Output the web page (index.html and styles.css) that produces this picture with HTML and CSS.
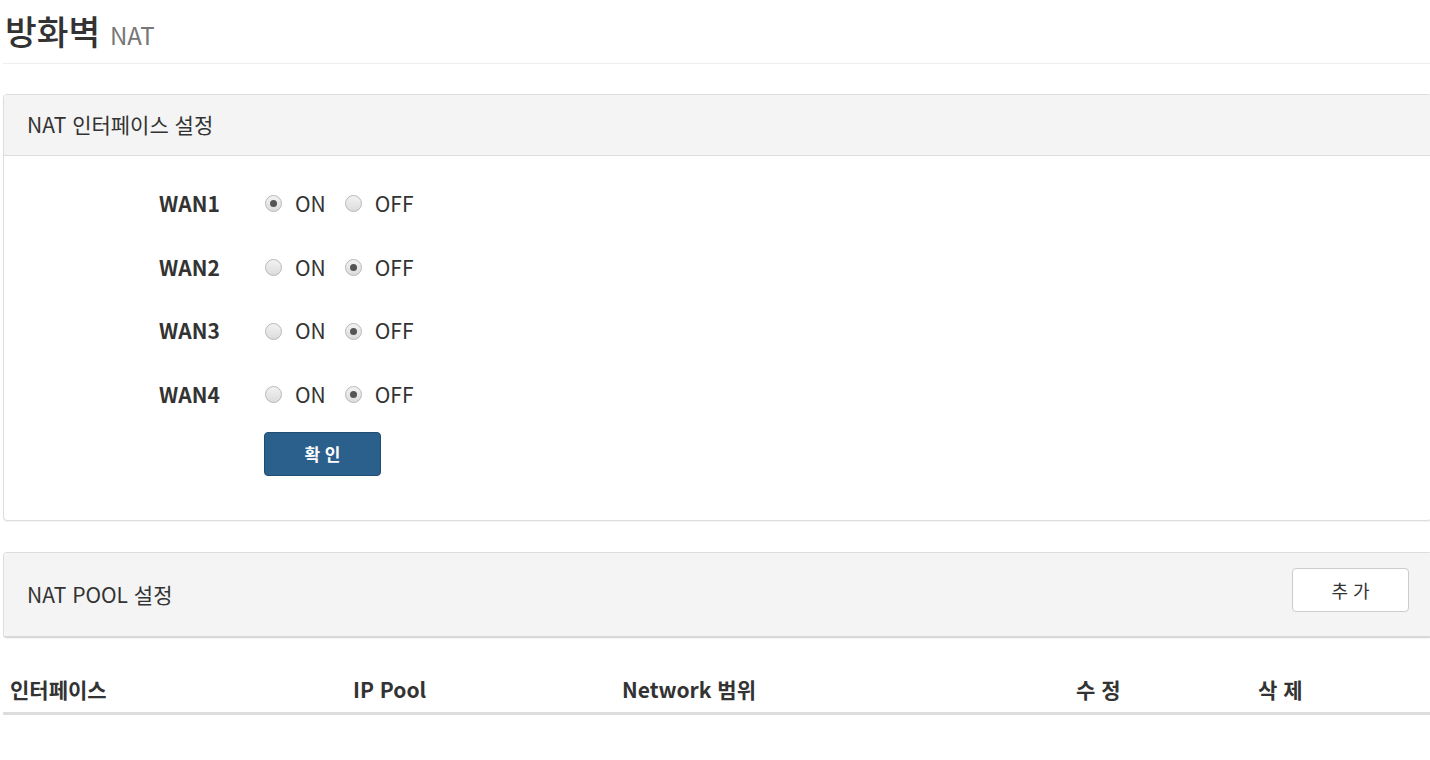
FILE: index.html
```html
<!DOCTYPE html>
<html lang="ko">
<head>
<meta charset="utf-8">
<title>방화벽 NAT</title>
<link rel="stylesheet" href="styles.css">
</head>
<body>
<div class="page">
  <div class="page-header">
    <h1>방화벽 <small>NAT</small></h1>
  </div>

  <section class="panel">
    <div class="panel-heading">NAT 인터페이스 설정</div>
    <div class="panel-body">
      <div class="form-row">
        <span class="label">WAN1</span>
        <label class="opt"><input type="radio" name="wan1" checked><span>ON</span></label>
        <label class="opt"><input type="radio" name="wan1"><span>OFF</span></label>
      </div>
      <div class="form-row">
        <span class="label">WAN2</span>
        <label class="opt"><input type="radio" name="wan2"><span>ON</span></label>
        <label class="opt"><input type="radio" name="wan2" checked><span>OFF</span></label>
      </div>
      <div class="form-row">
        <span class="label">WAN3</span>
        <label class="opt"><input type="radio" name="wan3"><span>ON</span></label>
        <label class="opt"><input type="radio" name="wan3" checked><span>OFF</span></label>
      </div>
      <div class="form-row">
        <span class="label">WAN4</span>
        <label class="opt"><input type="radio" name="wan4"><span>ON</span></label>
        <label class="opt"><input type="radio" name="wan4" checked><span>OFF</span></label>
      </div>
      <div class="actions">
        <button class="btn btn-primary" type="button">확 인</button>
      </div>
    </div>
  </section>

  <section class="panel panel-pool">
    <div class="panel-heading pool-heading">
      <span>NAT POOL 설정</span>
      <button class="btn btn-default" type="button">추 가</button>
    </div>
  </section>

  <div class="table">
    <div class="thead">
      <div class="th c1">인터페이스</div>
      <div class="th c2">IP Pool</div>
      <div class="th c3">Network 범위</div>
      <div class="th c4">수 정</div>
      <div class="th c5">삭 제</div>
    </div>
  </div>
</div>
</body>
</html>
```

FILE: styles.css
```css
html, body {
  margin: 0;
  padding: 0;
  overflow-x: hidden;
  background: #fff;
}

body {
  font-family: "Noto Sans CJK KR", "Noto Sans", sans-serif;
  color: #333;
  font-size: 21px;
}

.page {
  padding: 0 0 0 3px;
  margin-right: -2px;
}

.page-header {
  height: 64px;
  border-bottom: 1px solid #eee;
  box-sizing: border-box;
  padding: 6px 0 0 2px;
}

.page-header h1 {
  margin: 0;
  font-size: 34.5px;
  font-weight: 500;
  line-height: 48px;
  color: #333;
}

.page-header small {
  font-size: 24px;
  color: #777;
  font-weight: 400;
}

.panel {
  margin-top: 30px;
  border: 1px solid #ddd;
  border-radius: 4px;
  box-shadow: 0 1px 1px rgba(0, 0, 0, 0.05);
  background: #fff;
}

.panel-heading {
  height: 61px;
  box-sizing: border-box;
  display: flex;
  align-items: center;
  padding: 0 22px 3px 23px;
  background: #f4f4f4;
  border-bottom: 1px solid #ddd;
  border-radius: 3px 3px 0 0;
  font-size: 21px;
}

.panel-body {
  padding: 16px 0 44px 0;
}

.form-row {
  height: 63.7px;
  display: flex;
  align-items: center;
  padding-left: 155px;
  padding-bottom: 2px;
  box-sizing: border-box;
}

.label {
  width: 105px;
  font-weight: 700;
  font-size: 21px;
}

.opt {
  display: flex;
  align-items: center;
  margin-right: 18px;
}

.opt input {
  appearance: none;
  -webkit-appearance: none;
  width: 17px;
  height: 17px;
  margin: 2px 13px 0 1px;
  border-radius: 50%;
  border: 1px solid #b8b8b8;
  background: linear-gradient(#f2f2f2, #dcdcdc);
  box-sizing: border-box;
  position: relative;
}

.opt input:checked::after {
  content: "";
  position: absolute;
  left: 4px;
  top: 4px;
  width: 7px;
  height: 7px;
  border-radius: 50%;
  background: #555;
}

.opt span {
  font-size: 21px;
  line-height: 24px;
}

.actions {
  padding: 5px 0 0 260px;
}

.btn {
  width: 117px;
  height: 44px;
  border-radius: 4px;
  font-family: inherit;
  font-size: 17px;
  cursor: pointer;
}

.btn-primary {
  background: #2b5f8c;
  border: 1px solid #204d74;
  color: #fff;
  font-weight: 700;
}

.btn-default {
  background: #fff;
  border: 1px solid #ccc;
  color: #333;
  font-size: 18px;
  margin-bottom: 8px;
}

.panel-pool {
  margin-top: 31px;
  border-bottom: 2px solid #d9d9d9;
}

.pool-heading {
  height: 83px;
  padding-bottom: 0;
  justify-content: space-between;
  border-bottom: none;
  border-radius: 3px;
}

.table {
  margin-top: 20px;
}

.thead {
  display: flex;
  height: 54px;
  align-items: flex-end;
  border-bottom: 3px solid #ddd;
}

.th {
  font-weight: 700;
  font-size: 21px;
  line-height: 24px;
  padding: 0 0 11px 7px;
  box-sizing: border-box;
}

.c1 { width: 343px; }
.c2 { width: 269px; }
.c3 { width: 454px; }
.c4 { width: 182px; }
.c5 { flex: 1; }
```
